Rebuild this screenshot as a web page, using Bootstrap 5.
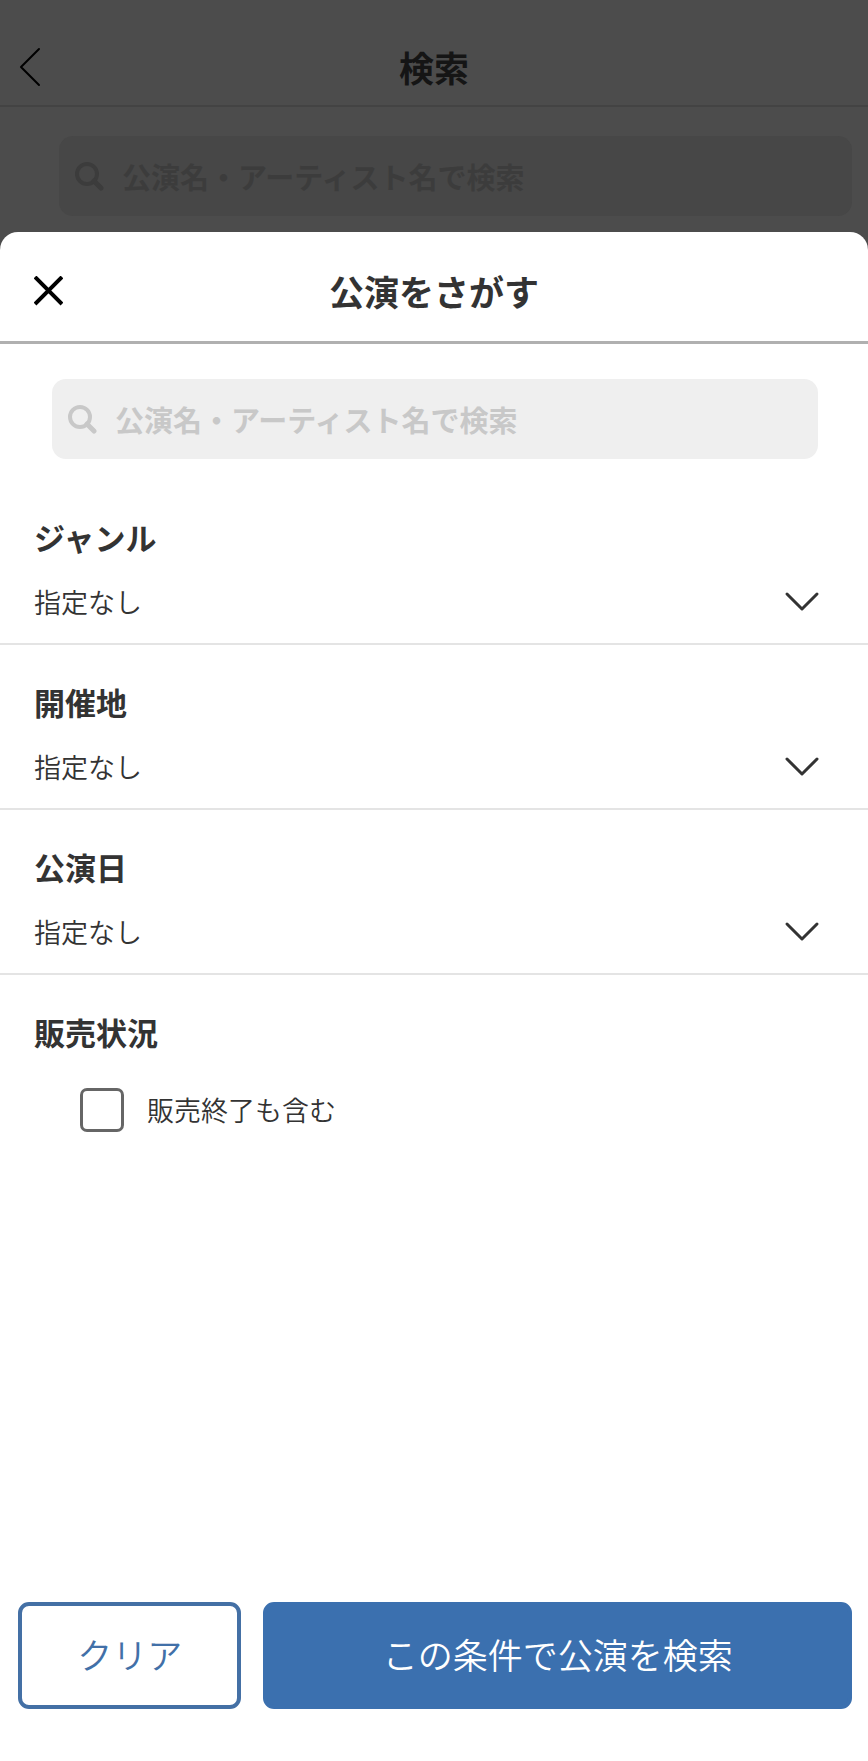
<!DOCTYPE html>
<html lang="ja">
<head>
<meta charset="utf-8">
<meta name="viewport" content="width=device-width, initial-scale=1">
<title>公演をさがす</title>
<link href="https://cdn.jsdelivr.net/npm/bootstrap@5.3.0/dist/css/bootstrap.min.css" rel="stylesheet">
<style>
  body { font-family: "Noto Sans CJK JP", sans-serif; color: #333; background: #4c4c4c; }
  .behind-bar { padding: 31px 18px 0; height: 107px; border-bottom: 2px solid #434343; }
  .bar-grid { display: grid; grid-template-columns: 64px 1fr 64px; align-items: center; }
  .behind-title { font-size: 35px; line-height: 72px; color: #151515; }
  .behind-search { margin: 29px 16px 16px 59px; }
  .search-box { height: 80px; border-radius: 14px; background: #efefef; color: #c8c8c8; padding: 0 16px; gap: 18px; }
  .search-box input { font-size: 29px; line-height: 44px; color: #333; outline: 0; min-width: 0; }
  .search-box input::placeholder { color: #c8c8c8; opacity: 1; }
  .search-dim { background: #474747; color: #3c3c3c; }
  .search-dim input::placeholder { color: #3c3c3c; }
  .sheet { border-radius: 18px 18px 0 0; }
  .sheet-head { padding: 23px 34px 14px; border-bottom: 3px solid #b0b0b0; }
  .sheet-title { font-size: 35px; line-height: 72px; }
  .sheet-search { margin: 35px 50px 21px 52px; }
  .criterion { padding: 35px 0 21px; border-bottom: 2px solid #e4e4e4; }
  .criterion-last { padding: 35px 34px 0; }
  .criterion-name { display: block; font-size: 31px; line-height: 44px; padding-left: 34px; }
  .criterion-last .criterion-name { padding-left: 0; }
  .picker { display: grid; margin-top: 23px; align-items: center; }
  .picker > * { grid-area: 1 / 1; }
  .picker select { appearance: none; font-size: 27px; font-weight: 350; line-height: 40px; height: 40px; padding: 0 34px; color: #333; }
  .picker svg { justify-self: end; margin-right: 48px; pointer-events: none; }
  .sold-out { margin: 34px 0 0 46px; gap: 23px; font-size: 27px; font-weight: 350; line-height: 44px; }
  .sold-out .form-check-input { width: 44px; height: 44px; border: 3px solid #666; border-radius: 7px; }
  .actions { display: grid; grid-template-columns: 11fr 29fr; gap: 22px; padding: 24px 16px 52px 18px; }
  .actions .btn { height: 107px; border-radius: 11px; font-size: 35px; font-weight: 350; border-width: 4px; padding: 0 0 2px; }
  .btn-clear { color: #4270a8; border-color: #4470a5; background: #fff; }
  .btn-find { color: #fff; border-color: #3b70af; background: #3b70af; }
  .btn-clear:hover { color: #fff; background: #4470a5; }
  .btn-find:hover { color: #fff; background: #315f96; }
</style>
</head>
<body class="d-flex flex-column min-vh-100">

<header class="behind-bar">
  <div class="bar-grid">
    <a href="#" aria-label="戻る" class="d-flex">
      <svg width="24" height="42" viewBox="0 0 24 42" fill="none" stroke="#000" stroke-width="2" stroke-linecap="round" stroke-linejoin="round"><path d="M21 3 3 21l18 18"/></svg>
    </a>
    <h1 class="behind-title fw-bold text-center m-0">検索</h1>
  </div>
</header>
<div class="behind-search search-box search-dim d-flex align-items-center">
  <svg class="flex-shrink-0" width="29" height="29" viewBox="0 0 29 29" fill="none" stroke="currentColor" aria-hidden="true"><circle cx="12" cy="12" r="10" stroke-width="4"/><path d="m19 19 7 7" stroke-width="5" stroke-linecap="round"/></svg>
  <input type="text" class="flex-grow-1 border-0 bg-transparent p-0 fw-bold" placeholder="公演名・アーティスト名で検索" aria-label="公演名・アーティスト名で検索">
</div>

<main class="sheet bg-white flex-grow-1 d-flex flex-column" role="dialog" aria-labelledby="sheetTitle">
  <div class="sheet-head">
    <div class="bar-grid">
      <button type="button" class="d-flex border-0 bg-transparent p-0" aria-label="閉じる">
        <svg width="29" height="31" viewBox="0 0 29 31" fill="none" stroke="#000" stroke-width="4"><path d="m1 1 27 27M28 1 1 28"/></svg>
      </button>
      <h2 class="sheet-title fw-bold text-center m-0" id="sheetTitle">公演をさがす</h2>
    </div>
  </div>

  <form class="flex-grow-1 d-flex flex-column">
    <div class="sheet-search search-box d-flex align-items-center">
      <svg class="flex-shrink-0" width="29" height="29" viewBox="0 0 29 29" fill="none" stroke="currentColor" aria-hidden="true"><circle cx="12" cy="12" r="10" stroke-width="4"/><path d="m19 19 7 7" stroke-width="5" stroke-linecap="round"/></svg>
      <input type="text" class="flex-grow-1 border-0 bg-transparent p-0 fw-bold" placeholder="公演名・アーティスト名で検索" aria-label="公演名・アーティスト名で検索">
    </div>

    <div class="criterion">
      <label class="criterion-name fw-bold" for="genre">ジャンル</label>
      <div class="picker">
        <select id="genre" class="w-100 border-0 bg-transparent"><option>指定なし</option></select>
        <svg width="36" height="22" viewBox="0 0 36 22" fill="none" stroke="#333" stroke-width="3" stroke-linecap="round" stroke-linejoin="round"><path d="m3 3 15 15L33 3"/></svg>
      </div>
    </div>
    <div class="criterion">
      <label class="criterion-name fw-bold" for="area">開催地</label>
      <div class="picker">
        <select id="area" class="w-100 border-0 bg-transparent"><option>指定なし</option></select>
        <svg width="36" height="22" viewBox="0 0 36 22" fill="none" stroke="#333" stroke-width="3" stroke-linecap="round" stroke-linejoin="round"><path d="m3 3 15 15L33 3"/></svg>
      </div>
    </div>
    <div class="criterion">
      <label class="criterion-name fw-bold" for="day">公演日</label>
      <div class="picker">
        <select id="day" class="w-100 border-0 bg-transparent"><option>指定なし</option></select>
        <svg width="36" height="22" viewBox="0 0 36 22" fill="none" stroke="#333" stroke-width="3" stroke-linecap="round" stroke-linejoin="round"><path d="m3 3 15 15L33 3"/></svg>
      </div>
    </div>
    <div class="criterion-last">
      <h3 class="criterion-name fw-bold m-0">販売状況</h3>
      <div class="sold-out d-flex align-items-center">
        <input class="form-check-input flex-shrink-0 m-0" type="checkbox" id="ended">
        <label for="ended">販売終了も含む</label>
      </div>
    </div>

    <div class="actions mt-auto">
      <button type="reset" class="btn btn-clear">クリア</button>
      <button type="submit" class="btn btn-find">この条件で公演を検索</button>
    </div>
  </form>
</main>

<script src="https://cdn.jsdelivr.net/npm/bootstrap@5.3.0/dist/js/bootstrap.bundle.min.js"></script>
</body>
</html>
